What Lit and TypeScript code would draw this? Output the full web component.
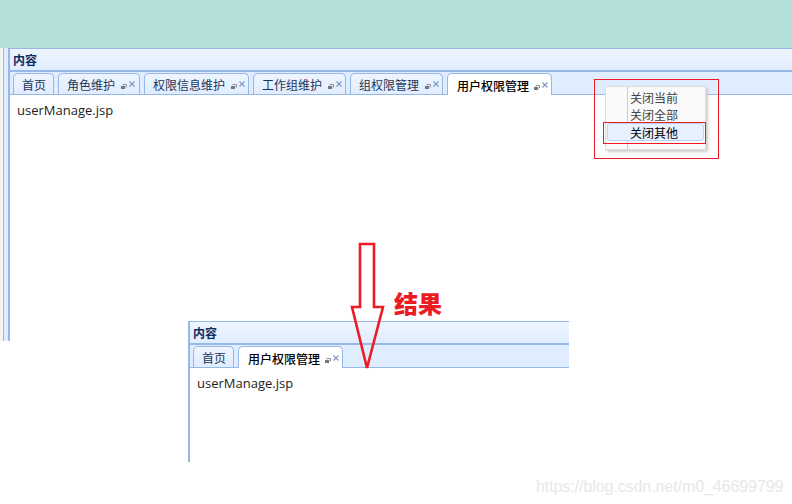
import { LitElement, html, css, svg } from "lit";
import { customElement } from "lit/decorators.js";

type Tab = { label: string; w: number; closable: boolean };

@customElement("app-panel")
class AppPanel extends LitElement {
  static properties = { tabs: { type: Array }, active: { type: String } };
  declare tabs: Tab[];
  declare active: string;
  constructor() {
    super();
    this.tabs = [];
    this.active = "";
  }
  static styles = css`
    :host { display: flex; flex-direction: column; height: 100%; box-sizing: border-box;
      border-left: 2px solid #95b8e7; font-family: "Noto Sans CJK SC", sans-serif; color: #0e2d5f; }
    .head { height: 22px; flex: none; box-sizing: border-box; border-top: 1px solid #95b8e7;
      background: linear-gradient(#eff5ff, #e0ecff); display: flex; align-items: center;
      padding-left: 3px; font-size: 12px; font-weight: 700; line-height: 17px; color: #0e2d5f; }
    .strip { height: 25px; flex: none; box-sizing: border-box; border-top: 2px solid #95b8e7;
      border-bottom: 1px solid #95b8e7; background: #e0ecff; display: flex; gap: 4px;
      padding: 1px 0 0 3px; }
    .tab { box-sizing: border-box; height: 21px; flex: none; border: 1px solid #95b8e7;
      border-bottom: 0; border-radius: 5px 5px 0 0; background: linear-gradient(#eff5ff, #e0ecff);
      display: flex; align-items: center; font-size: 12px; line-height: 20px; padding: 2px 0 0 8px;
      color: #1f3557; }
    .tab.active { background: #fff; height: 22px; font-weight: 500; color: #000; padding-left: 9px; }
    .label { flex: none; }
    .tools { display: flex; align-items: flex-start; gap: 2px; margin-left: 6px; }
    .tab.active .tools { margin-left: 5px; }
    .tools svg { display: block; }
    .tools svg.pin { margin-top: 3px; }
    .body { padding: 5px 0 0 7px; font: 13px/20px "Open Sans", "Noto Sans CJK SC", sans-serif; color: #1c1c1c; background: #fff; flex: 1; }
  `;
  render() {
    return html`
      <div class="head">内容</div>
      <div class="strip">
        ${this.tabs.map(
          (t) => html`<div class="tab ${t.label === this.active ? "active" : ""}" style="width:${t.w}px">
            <span class="label">${t.label}</span>
            ${t.closable
              ? html`<span class="tools">
                  <svg class="pin" width="6" height="5" viewBox="0 0 6 5"><path d="M0 2H4V5H0Z" fill="#74787f"/><path d="M2 1.5V0.5H5.5V3H4.5" fill="none" stroke="#8a8e95" stroke-width="1"/></svg>
                  <svg width="6" height="6" viewBox="0 0 6 6"><path d="M0.5 0.5L5.5 5.5M5.5 0.5L0.5 5.5" stroke="#7f9ac4" stroke-width="1.2"/></svg>
                </span>`
              : ""}
          </div>`
        )}
      </div>
      <div class="body">userManage.jsp</div>
    `;
  }
}

@customElement("app-root")
class AppRoot extends LitElement {
  static styles = css`
    :host { display: block; width: 792px; height: 504px; background: #fff; overflow: hidden;
      position: relative; font-family: "Noto Sans CJK SC", sans-serif; }
    .banner { height: 48px; background: #b3dfda; }
    .top { height: 293px; display: flex; }
    .rail { width: 8px; flex: none; box-sizing: border-box;
      background: linear-gradient(90deg, #f4f4f4 0 3px, #b4b4b4 3px 4px, #e0ecff 4px); }
    .main { flex: 1; min-width: 0; }
    .lower { position: absolute; left: 188px; top: 321px; width: 381px; height: 141px; }
    .menu { position: absolute; left: 605px; top: 86px; width: 101px; height: 64px; box-sizing: border-box;
      background: #fafafa; border: 1px solid #ddd; box-shadow: 2px 2px 3px #ccc;
      font-size: 12px; color: #444; display: flex; flex-direction: column; padding-top: 2px; }
    .menu::before { content: ""; position: absolute; left: 21px; top: 0; bottom: 0; width: 1px; background: #ccc; }
    .item { height: 17px; line-height: 17px; padding-left: 24px; position: relative; flex: none; }
    .item.on { margin: 0 1px; height: 18px; line-height: 17px; padding-left: 22px; background: #e6f0ff;
      border: 1px solid #b7d2ff; border-radius: 3px; color: #000; box-sizing: border-box; }
    .mark { position: absolute; border: 1px solid #ed1c24; box-sizing: border-box; pointer-events: none; }
    .m1 { left: 594px; top: 79px; width: 125px; height: 80px; }
    .m2 { left: 603px; top: 122px; width: 103px; height: 22px; }
    .arrow { position: absolute; left: 345px; top: 238px; }
    .result { position: absolute; left: 394px; top: 287px; font: 900 24px/32px "Noto Sans CJK SC", sans-serif; color: #ed1c24; }
    .wm { position: absolute; left: 536px; top: 476px; font: 16px/22px "Liberation Sans", sans-serif; color: #e8e8e8; letter-spacing: -0.08px; }
  `;
  render() {
    const top: Tab[] = [
      { label: "首页", w: 41, closable: false },
      { label: "角色维护", w: 82, closable: true },
      { label: "权限信息维护", w: 105, closable: true },
      { label: "工作组维护", w: 93, closable: true },
      { label: "组权限管理", w: 93, closable: true },
      { label: "用户权限管理", w: 105, closable: true },
    ];
    const low = [top[0], top[5]];
    return html`
      <div class="banner"></div>
      <div class="top">
        <div class="rail"></div>
        <div class="main"><app-panel .tabs=${top} .active=${"用户权限管理"}></app-panel></div>
      </div>
      <div class="lower"><app-panel .tabs=${low} .active=${"用户权限管理"}></app-panel></div>
      <div class="menu">
        <div class="item">关闭当前</div>
        <div class="item">关闭全部</div>
        <div class="item on">关闭其他</div>
      </div>
      <div class="mark m1"></div>
      <div class="mark m2"></div>
      <svg class="arrow" width="46" height="136" viewBox="345 238 46 136">
        ${svg`<path d="M360 244H374V307H383L367 368L352 307H360Z" fill="none" stroke="#ed1c24" stroke-width="2.6"/>`}
      </svg>
      <div class="result">结果</div>
      <div class="wm">https://blog.csdn.net/m0_46699799</div>
    `;
  }
}
